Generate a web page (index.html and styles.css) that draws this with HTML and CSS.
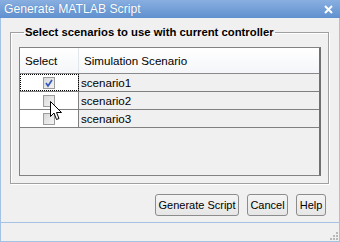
FILE: index.html
```html
<!DOCTYPE html>
<html lang="en">

<head>
  <meta charset="UTF-8">
  <title>Generate MATLAB Script</title>
  <link rel="stylesheet" href="styles.css">
</head>

<body>
  <div class="window">
    <div class="titlebar">
      <span class="titlebar__text">Generate MATLAB Script</span>
      <svg class="titlebar__close" width="9" height="9" viewBox="0 0 9 9">
        <path d="M1 1 L8 8 M8 1 L1 8" stroke="#fff" stroke-width="2"/>
      </svg>
    </div>

    <fieldset class="group">
      <legend>Select scenarios to use with current controller</legend>

      <div class="table">
        <div class="table__head">
          <div class="cell cell--select">Select</div>
          <div class="cell">Simulation Scenario</div>
        </div>

        <div class="table__row">
          <div class="cell cell--select cell--focus"><span class="check check--on">
            <svg width="10" height="10" viewBox="0 0 10 10"><path d="M2 5 L4 8 L8 2" fill="none" stroke="#3256b8" stroke-width="1.6"/></svg>
          </span></div>
          <div class="cell cell--name">scenario1</div>
        </div>
        <div class="table__row">
          <div class="cell cell--select"><span class="check"></span></div>
          <div class="cell cell--name">scenario2</div>
        </div>
        <div class="table__row">
          <div class="cell cell--select"><span class="check"></span></div>
          <div class="cell cell--name">scenario3</div>
        </div>
      </div>
    </fieldset>

    <div class="buttons">
      <button class="btn-generate">Generate Script</button>
      <button class="btn-cancel">Cancel</button>
      <button class="btn-help">Help</button>
    </div>

    <div class="statusbar">
      <svg class="grip" width="10" height="10" viewBox="0 0 10 10">
        <rect x="8" y="2" width="2" height="2" fill="#b8b8b8"/>
        <rect x="5" y="5" width="2" height="2" fill="#b8b8b8"/>
        <rect x="8" y="5" width="2" height="2" fill="#b8b8b8"/>
        <rect x="2" y="8" width="2" height="2" fill="#b8b8b8"/>
        <rect x="5" y="8" width="2" height="2" fill="#b8b8b8"/>
        <rect x="8" y="8" width="2" height="2" fill="#b8b8b8"/>
      </svg>
    </div>

    <!-- mouse pointer -->
    <svg class="pointer" width="13" height="20" viewBox="0 0 13 20">
      <path d="M0.5 0.5 L0.5 15.5 L4 12 L6.5 18.5 L9 17.5 L6.5 11.5 L11.5 11.5 Z" fill="#fff" stroke="#000" stroke-width="1"/>
    </svg>
  </div>
</body>

</html>
```

FILE: styles.css
```css
* {
  box-sizing: border-box;
}

body {
  margin: 0;
  font-family: "Liberation Sans", Arial, sans-serif;
  font-size: 12px;
  color: #000;
}

.window {
  position: relative;
  display: flex;
  flex-direction: column;
  width: 340px;
  height: 242px;
  border: 1px solid #a3c2e4;
  border-top: none;
  background-color: #f0f0f0;
}

.titlebar {
  display: flex;
  align-items: center;
  justify-content: space-between;
  height: 18px;
  margin: 0 -1px;
  padding: 0 7px 0 4px;
  background: linear-gradient(#89afe0, #5f90cf);
  color: #fff;
  font-size: 12.2px;
}

.titlebar__text {
  text-shadow: 0 0 1px #4a78b0;
}

.group {
  margin: 7px 10px 0 9px;
  padding: 8px 7px 7px 8px;
  border: 1px solid #a0a0a0;
  box-shadow: inset 1px 1px 0 #fff, 1px 1px 0 #fff;
}

.group legend {
  margin-left: 5px;
  padding: 0 1px;
  font-weight: bold;
  font-size: 11.3px;
  line-height: 14px;
}

.table {
  height: 129px;
  border: 1px solid #828282;
  border-right: 2px solid #707070;
  background-color: #f0f0f0;
}

.table__head,
.table__row {
  display: grid;
  grid-template-columns: 59px 1fr;
}

.table__head {
  height: 26px;
  border-bottom: 1px solid #8a8a8a;
  background: linear-gradient(#ffffff, #f4f6f9);
}

.table__head .cell {
  display: flex;
  align-items: center;
  padding-left: 5px;
  font-size: 11.6px;
}

.table__head .cell--select {
  border-right: 1px solid #e3e6ea;
}

.table__row {
  height: 18px;
  border-bottom: 1px solid #808080;
}

.table__row .cell--select {
  display: flex;
  align-items: center;
  justify-content: center;
  border-right: 1px solid #808080;
  background-color: #fff;
}

.cell--focus {
  outline: 1px dotted #000;
  outline-offset: -1px;
}

.cell--name {
  padding-left: 2px;
  line-height: 17px;
  font-size: 11.6px;
}

.check {
  display: flex;
  align-items: center;
  justify-content: center;
  width: 12px;
  height: 12px;
  border: 1px solid #9c9c9c;
  background: linear-gradient(135deg, #d9d9d9, #f4f4f4);
}

.buttons {
  display: flex;
  justify-content: flex-end;
  gap: 8px;
  margin-top: 10px;
  padding-right: 13px;
}

button {
  height: 22px;
  margin: 0;
  padding: 0;
  border: 1px solid #8c8c8c;
  border-radius: 3px;
  background: linear-gradient(#f4f4f4, #e6e6e6);
  color: #000;
  font-family: "Liberation Sans", Arial, sans-serif;
  font-size: 11px;
  white-space: nowrap;
}

.btn-generate {
  width: 84px;
}

.btn-cancel {
  width: 41px;
}

.btn-help {
  width: 30px;
}

.statusbar {
  display: flex;
  justify-content: flex-end;
  align-items: flex-end;
  height: 19px;
  margin-top: auto;
  padding: 0 1px 1px 0;
  border-top: 1px solid #a3c2e4;
}

.pointer {
  position: absolute;
  left: 49px;
  top: 101px;
}
```
